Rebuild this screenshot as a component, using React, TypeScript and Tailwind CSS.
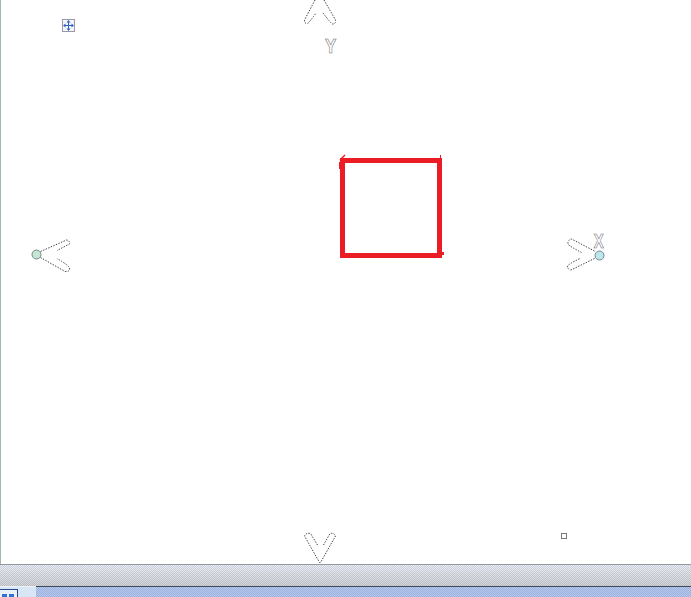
function Handles() {
  return (
    <svg className="absolute inset-0" width="691" height="564" viewBox="0 0 691 564" fill="none">
      <g stroke="#3c3c44" strokeWidth="1" strokeDasharray="1.4 1.4">
        {/* top arrow */}
        <path d="M315 0 L304.5 20 Q304 23.5 307.5 23.5 Q309 23 316 13" />
        <path d="M324 0 L335.5 20 Q336 24 332.5 24 Q331 23.5 323 13" />
        {/* bottom arrow */}
        <path d="M317.5 545 L310.5 533.5 Q306 532.5 304.5 536 L319.5 562.5 L320.5 562.5 L335.5 536 Q334 532.5 330 533.5 L323.5 545" />
        {/* left handle */}
        <path d="M40.5 251.5 L66.5 240 Q70 240.5 69.5 244 L57 250.5" />
        <path d="M40.5 257.5 L65 271.5 Q70 272 69.5 268 Q69 265.5 57 258.5" />
        {/* right handle */}
        <path d="M594.5 251 L571.5 239 Q567.5 240 568 244 Q569 246 581.5 252.5" />
        <path d="M594.5 258.5 L571 270 Q567.5 269.5 567.5 266 Q568.5 264 580 258.5" />
      </g>
      <circle cx="36.5" cy="254.5" r="4.5" fill="#c4e6d6" stroke="#77877f" />
      <circle cx="599.5" cy="255.5" r="4.5" fill="#bde6ee" stroke="#77878a" />
    </svg>
  );
}

function MoveIcon() {
  return (
    <div className="absolute left-[62px] top-[19px] w-[13px] h-[13px] border border-[#9a98a8] bg-[#f4f6fa] flex items-center justify-center">
      <svg width="11" height="11" viewBox="0 0 11 11" fill="none">
        <path d="M5.5 1 V10 M1 5.5 H10" stroke="#2f62c4" strokeWidth="1" />
        <path d="M5.5 0 L7.5 2.5 H3.5 Z M5.5 11 L7.5 8.5 H3.5 Z M0 5.5 L2.5 3.5 V7.5 Z M11 5.5 L8.5 3.5 V7.5 Z" fill="#2f62c4" />
      </svg>
    </div>
  );
}

function RedSquare() {
  return (
    <>
      <div className="absolute left-[340px] top-[158px] w-[102px] h-[100px] border-[5px] border-[#ec1c24]" />
      <svg className="absolute left-[336px] top-[152px]" width="110" height="106" viewBox="0 0 110 106" fill="none">
        <path d="M4 8 L9 3" stroke="#ec1c24" strokeWidth="1.5" />
        <path d="M3.5 10 V17" stroke="#ec1c24" strokeWidth="1" />
        <path d="M104.5 3 V7" stroke="#ec1c24" strokeWidth="1" />
        <path d="M105 101.5 H108" stroke="#ec1c24" strokeWidth="3" />
      </svg>
    </>
  );
}

export default function App() {
  return (
    <div className="w-[691px] h-[597px] overflow-hidden flex flex-col bg-white font-['Liberation_Sans',sans-serif]">
      <div className="relative h-[564px] shrink-0 bg-white border-l border-[#a5b8ac]">
        <div className="absolute -left-px top-0 w-[691px] h-[564px]">
          <Handles />
          <MoveIcon />
          <RedSquare />
          <span className="absolute left-[324px] top-[36px] inline-block scale-x-[0.85] text-[20px] leading-[20px] font-bold text-white [-webkit-text-stroke:0.6px_#6c6c74]">Y</span>
          <span className="absolute left-[592px] top-[231px] inline-block scale-x-[0.75] text-[20px] leading-[20px] font-bold text-white [-webkit-text-stroke:0.6px_#6c6c74]">X</span>
          <div className="absolute left-[561px] top-[533px] w-[6px] h-[6px] border border-[#77777f] bg-white" />
        </div>
      </div>
      <div className="h-px shrink-0 bg-[#8f9aa0]" />
      <div className="h-[21px] shrink-0 [background:repeating-conic-gradient(#ffffff30_0_25%,#70609030_0_50%)_0_0/2px_2px,linear-gradient(#e6eaf2,#c8cccc)]" />
      <div className="flex-1 relative flex [background:repeating-conic-gradient(#ffffff30_0_25%,#5060a030_0_50%)_0_0/2px_2px,#a9c0ea]">
        <div className="w-[36px] h-full bg-[#d8e6f6] border-t border-[#eef1f8] flex items-end">
          <div className="w-[18px] h-[8px] border-t border-r border-[#2a4a86] bg-[#e8f0fa] flex gap-[2px] pl-[2px] pt-[4px]">
            <div className="w-[5px] h-[4px] bg-[#2f6fd6]" />
            <div className="w-[5px] h-[4px] bg-[#2f6fd6]" />
          </div>
        </div>
        <div className="flex-1 border-t border-[#3c4a5a]" />
      </div>
    </div>
  );
}
